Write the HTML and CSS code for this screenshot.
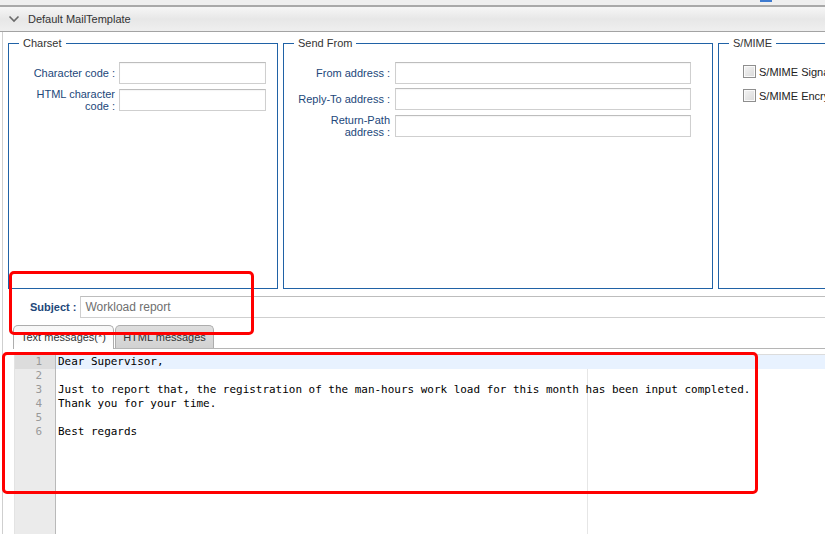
FILE: index.html
```html
<!DOCTYPE html>
<html>
<head>
<meta charset="utf-8">
<link rel="stylesheet" href="styles.css">
</head>
<body>
<div class="topstrip"><span class="topbtn"></span></div>
<div class="header">
  <svg class="chev" width="12" height="10" viewBox="0 0 12 10"><path d="M1.5 2.5 L6 7 L10.5 2.5" fill="none" stroke="#6a6a6a" stroke-width="1.6"/></svg>
  <span class="title">Default MailTemplate</span>
</div>
<div class="panel">
  <div class="boxes">
    <fieldset class="box box-charset">
      <legend>Charset</legend>
      <div class="form form-charset">
        <label class="lbl">Character code :</label><input class="inp" type="text">
        <label class="lbl">HTML character<br>code :</label><input class="inp" type="text">
      </div>
    </fieldset>
    <fieldset class="box box-from">
      <legend>Send From</legend>
      <div class="form form-from">
        <label class="lbl">From address :</label><input class="inp" type="text">
        <label class="lbl">Reply-To address :</label><input class="inp" type="text">
        <label class="lbl">Return-Path<br>address :</label><input class="inp" type="text">
      </div>
    </fieldset>
    <fieldset class="box box-smime">
      <legend>S/MIME</legend>
      <div class="checks">
        <div class="check"><span class="cb"></span><span>S/MIME Signature</span></div>
        <div class="check"><span class="cb"></span><span>S/MIME Encryption</span></div>
      </div>
    </fieldset>
  </div>
  <div class="subject">
    <label class="subj-lbl">Subject :</label>
    <input class="subj-inp" type="text" value="Workload report">
  </div>
  <div class="tabs">
    <div class="tab tab-active">Text messages(*)</div>
    <div class="tab">HTML messages</div>
  </div>
  <div class="editor">
    <div class="gutter">
      <div class="ln ln-active">1</div>
      <div class="ln">2</div>
      <div class="ln">3</div>
      <div class="ln">4</div>
      <div class="ln">5</div>
      <div class="ln">6</div>
    </div>
    <div class="code">
      <div class="margin-line"></div>
      <div class="cl cl-active">Dear Supervisor,</div>
      <div class="cl"> </div>
      <div class="cl">Just to report that, the registration of the man-hours work load for this month has been input completed.</div>
      <div class="cl">Thank you for your time.</div>
      <div class="cl"> </div>
      <div class="cl">Best regards</div>
    </div>
  </div>
</div>
<div class="mark mark-subject"></div>
<div class="mark mark-body"></div>
</body>
</html>
```
FILE: styles.css
```css
html, body {
  margin: 0;
  padding: 0;
  overflow: hidden;
  background: #ffffff;
  width: 825px;
  height: 534px;
}
body {
  font-family: "Liberation Sans", Arial, sans-serif;
  font-size: 11px;
  color: #333;
  position: relative;
}
.topstrip {
  height: 5px;
  background: #efefef;
  border-bottom: 2px solid #a9a9a9;
  display: flex;
}
.topbtn {
  display: block;
  width: 12px;
  height: 2px;
  margin-left: 760px;
  background: #3f7bd0;
}
.header {
  height: 24px;
  background: linear-gradient(#f6f6f6, #e7e7e7 50%, #efefef);
  border-bottom: 1px solid #a3a3a3;
  display: flex;
  align-items: center;
}
.chev {
  margin-left: 8px;
  margin-right: 8px;
}
.title {
  color: #333;
  font-size: 11px;
}
.panel {
  margin-left: 2px;
  border-left: 1px solid #cfcfcf;
  padding-top: 5px;
}
.boxes {
  display: flex;
  gap: 5px;
  padding-left: 5px;
}
.box {
  margin: 0;
  padding: 0 0 0 2px;
  border: 1px solid #2062a6;
  box-sizing: border-box;
  height: 252px;
  min-width: 0;
}
.box legend {
  margin-left: 8px;
  padding: 0 4px;
  line-height: 13px;
  font-size: 11px;
  color: #333;
}
.box-charset { width: 270px; flex: none; }
.box-from { width: 430px; flex: none; }
.box-smime { width: 140px; flex: none; }
.form {
  display: grid;
  row-gap: 4px;
  align-items: center;
  margin-top: 12px;
}
.form-charset { grid-template-columns: 104px 147px; column-gap: 4px; }
.form-from { grid-template-columns: 104px 296px; column-gap: 5px; }
.lbl {
  text-align: right;
  color: #22477a;
  line-height: 12px;
  font-size: 11px;
  white-space: nowrap;
}
.inp {
  box-sizing: border-box;
  height: 22px;
  margin: 0;
  border: 1px solid #cfcfcf;
  border-top-color: #bdbdbd;
  background: #fff;
  box-shadow: inset 0 1px 1px rgba(0,0,0,0.04);
  outline: none;
  padding: 0 4px;
}
.checks {
  margin-top: 15px;
  margin-left: 22px;
  display: flex;
  flex-direction: column;
  gap: 11px;
}
.check {
  display: flex;
  align-items: center;
  gap: 3px;
  height: 13px;
  white-space: nowrap;
  color: #222;
  font-size: 11px;
}
.cb {
  display: block;
  width: 11px;
  height: 11px;
  border: 1px solid #8e8e8e;
  background: linear-gradient(135deg, #f4f4f4, #d9d9d9);
  box-shadow: inset 0 0 0 1px #fafafa;
}
.subject {
  display: flex;
  align-items: center;
  margin-top: 7px;
  padding-left: 27px;
}
.subj-lbl {
  font-weight: bold;
  color: #22477a;
  font-size: 11px;
  margin-right: 4px;
}
.subj-inp {
  flex: 1;
  box-sizing: border-box;
  height: 22px;
  margin: 0 -6px 0 0;
  border: 1px solid #cfcfcf;
  border-top-color: #bdbdbd;
  padding: 0 4px;
  font-family: "Liberation Sans", Arial, sans-serif;
  font-size: 12px;
  color: #6f6f6f;
  outline: none;
}
.tabs {
  display: flex;
  gap: 1px;
  margin-top: 7px;
  margin-left: 10px;
  height: 23px;
  border-bottom: 1px solid #b5b5b5;
  align-items: flex-end;
}
.tab {
  box-sizing: border-box;
  height: 23px;
  line-height: 22px;
  border: 1px solid #adadad;
  border-bottom: none;
  border-radius: 5px 5px 0 0;
  background: linear-gradient(#dedede, #d2d2d2);
  color: #333;
  text-align: center;
  width: 99px;
  font-size: 11px;
}
.tab-active {
  width: 101px;
  height: 24px;
  margin-bottom: -1px;
  background: linear-gradient(#f7f7f7, #ffffff);
}
.editor {
  margin-top: 5px;
  margin-left: 11px;
  border-top: 1px solid #dcdcdc;
  border-left: 1px solid #e3e3e3;
  display: flex;
  height: 300px;
  font-family: "DejaVu Sans Mono", "Liberation Mono", monospace;
  font-size: 10.96px;
}
.gutter {
  width: 40px;
  flex: none;
  background: #ebebeb;
  border-right: 1px solid #b9b9b9;
}
.ln {
  height: 14px;
  line-height: 14px;
  text-align: right;
  padding-right: 13px;
  color: #999;
}
.ln-active {
  background: #dcdcdc;
}
.code {
  flex: 1;
  position: relative;
}
.margin-line {
  position: absolute;
  left: 531px;
  top: 0;
  bottom: 0;
  width: 1px;
  background: #e6e6e6;
}
.cl {
  position: relative;
  height: 14px;
  line-height: 14px;
  padding-left: 2px;
  white-space: pre;
  color: #000;
}
.cl-active {
  background: #e8f2ff;
}
.mark {
  position: absolute;
  border: 3px solid #ff0000;
  border-radius: 5px;
  box-sizing: border-box;
}
.mark-subject {
  left: 9px;
  top: 271px;
  width: 245px;
  height: 64px;
}
.mark-body {
  left: 2px;
  top: 352px;
  width: 756px;
  height: 142px;
}
```
